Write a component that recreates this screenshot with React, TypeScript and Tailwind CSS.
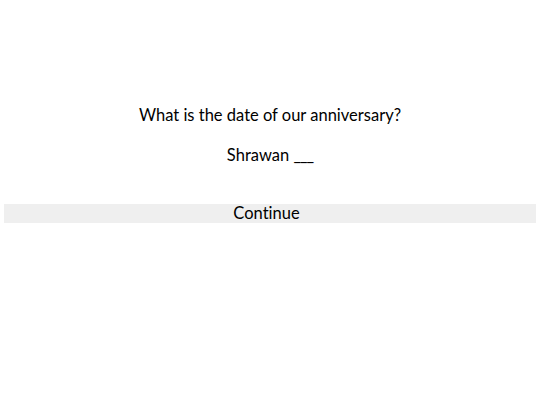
export default function App() {
  return (
    <div
      className="flex min-h-[405px] w-full flex-col items-center bg-white pt-[104px] text-black [font-variant-ligatures:none]"
      style={{ fontFamily: "Lato, 'Noto Sans', sans-serif" }}
    >
      <p className="text-[16.5px] leading-[22px]">What is the date of our anniversary?</p>
      <p className="mt-[18px] text-[16.5px] leading-[22px]">
        Shrawan <span className="tracking-[-1px]">___</span>
      </p>
      <div className="mt-[38px] w-full px-[4px]">
        <button className="block h-[19px] w-full bg-[#efefef] pr-[7px] text-[16.5px] leading-[19px] text-black [font-variant-ligatures:none]">
          Continue
        </button>
      </div>
    </div>
  );
}
